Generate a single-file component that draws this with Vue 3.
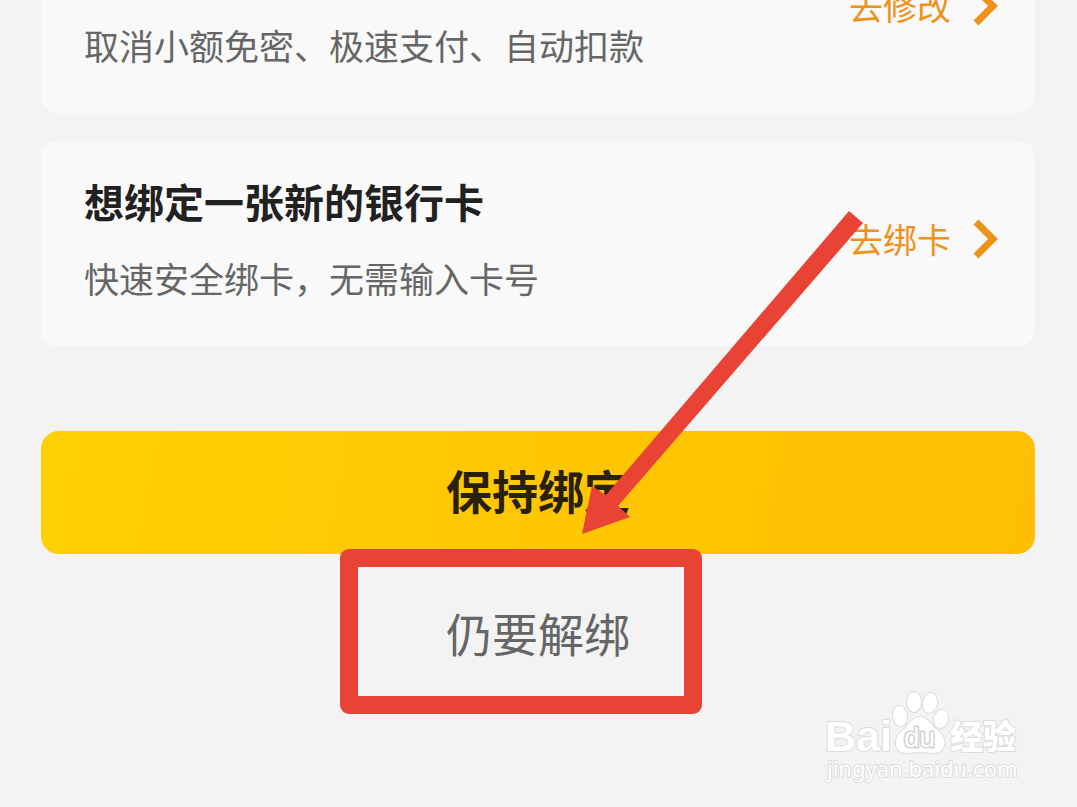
<script setup>
const cards = [
  { id: 'pay', title: '', desc: '取消小额免密、极速支付、自动扣款', action: '去修改' },
  { id: 'bind', title: '想绑定一张新的银行卡', desc: '快速安全绑卡，无需输入卡号', action: '去绑卡' },
]
</script>

<template>
  <main class="page">
    <section class="cards">
      <article v-for="card in cards" :key="card.id" class="card">
        <div class="info">
          <h2 v-if="card.title" class="title">{{ card.title }}</h2>
          <p class="desc">{{ card.desc }}</p>
        </div>
        <a class="link" href="#">
          <span>{{ card.action }}</span>
          <svg class="chevron" viewBox="0 0 26 40" aria-hidden="true">
            <path d="M3 3 L20 20 L3 37" fill="none" stroke="#ee921a" stroke-width="7" />
          </svg>
        </a>
      </article>
    </section>

    <section class="actions">
      <button class="keep" type="button">保持绑定</button>
      <div class="unbind-row">
        <button class="unbind" type="button">仍要解绑</button>
        <div class="frame"></div>
      </div>
      <svg class="arrow" viewBox="0 0 283 326" aria-hidden="true">
        <polygon points="268,1 282,13 37,296 49,307 1,324 11,276 25,285" fill="#e94335" />
      </svg>
    </section>

    <svg class="watermark" viewBox="0 0 210 110" role="img" aria-label="Baidu 经验">
      <g class="mark">
        <text class="latin" x="5" y="66">Bai</text>
        <ellipse cx="80" cy="31" rx="7" ry="10" transform="rotate(-8 80 31)" />
        <ellipse cx="94" cy="17" rx="7" ry="10" />
        <ellipse cx="110" cy="18" rx="7" ry="10" transform="rotate(10 110 18)" />
        <ellipse cx="121" cy="34" rx="7" ry="9" transform="rotate(16 121 34)" />
        <path d="M100 32 C91 32 89 41 82 46 C77 50 74 57 77 63 C81 71 91 67 100 67 C110 67 119 71 123 63 C127 56 123 50 118 46 C111 41 109 32 100 32 Z" />
        <text class="du" x="84" y="62">du</text>
        <text class="cjk" x="130" y="64">经验</text>
        <text class="site" x="7" y="92">jingyan.baidu.com</text>
      </g>
    </svg>
  </main>
</template>

<style>
body {
  background: #f3f3f3;
}
</style>

<style scoped>
.page {
  position: relative;
  box-sizing: border-box;
  min-height: 100vh;
  padding: 0 42px 0 41px;
  overflow: hidden;
  background: #f3f3f3;
  font-family: "Noto Sans CJK SC", sans-serif;
}

/* The list is scrolled so that the first card runs off the top. */
.cards {
  display: flex;
  flex-direction: column;
  gap: 28px;
  margin-top: -92px;
}

.card {
  display: flex;
  align-items: center;
  justify-content: space-between;
  box-sizing: border-box;
  min-height: 205px;
  padding: 34px 36px 43px 43px;
  border-radius: 16px;
  background: #f9f9f9;
}

.info {
  display: flex;
  flex-direction: column;
  gap: 28px;
  align-self: flex-end;
}

.title {
  margin: 0;
  color: #212121;
  font-size: 40px;
  font-weight: 700;
  line-height: 48px;
}

.desc {
  margin: 0;
  color: #666;
  font-size: 35px;
  line-height: 50px;
}

.link {
  display: flex;
  gap: 22px;
  align-items: center;
  color: #ee921a;
  font-size: 34px;
  line-height: 50px;
  text-decoration: none;
}

.chevron {
  width: 26px;
  height: 40px;
}

.actions {
  position: relative;
  margin-top: 85px;
}

.keep,
.unbind {
  display: block;
  width: 100%;
  padding: 0 0 8px;
  border: 0;
  font-family: inherit;
  font-size: 46px;
}

.keep {
  height: 123px;
  border-radius: 18px;
  background: linear-gradient(100deg, #ffd004, #ffbe02);
  color: #29200a;
  font-weight: 700;
}

.unbind-row {
  position: relative;
}

.unbind {
  height: 164px;
  background: transparent;
  color: #666;
}

.frame {
  position: absolute;
  top: -5px;
  left: calc(50% - 198px);
  box-sizing: border-box;
  width: 362px;
  height: 165px;
  border: 18px solid #e94335;
  border-radius: 9px;
  pointer-events: none;
}

.arrow {
  position: absolute;
  top: -221px;
  left: calc(50% + 43px);
  width: 283px;
  height: 326px;
  pointer-events: none;
}

.watermark {
  position: absolute;
  right: 47px;
  bottom: 12px;
  width: 210px;
  height: 110px;
}

.mark {
  fill: #fff;
  stroke: #dcdcdc;
  stroke-width: 2px;
  stroke-linejoin: round;
  paint-order: stroke;
}

.latin {
  font: 700 43px "Liberation Sans", sans-serif;
}

.du {
  font: 400 28px "Liberation Sans", sans-serif;
  stroke: #d0d0d0;
  stroke-width: 3px;
}

.cjk {
  font: 900 33px "Noto Sans CJK SC", sans-serif;
}

.site {
  font: 400 22px "Noto Sans", sans-serif;
}
</style>
